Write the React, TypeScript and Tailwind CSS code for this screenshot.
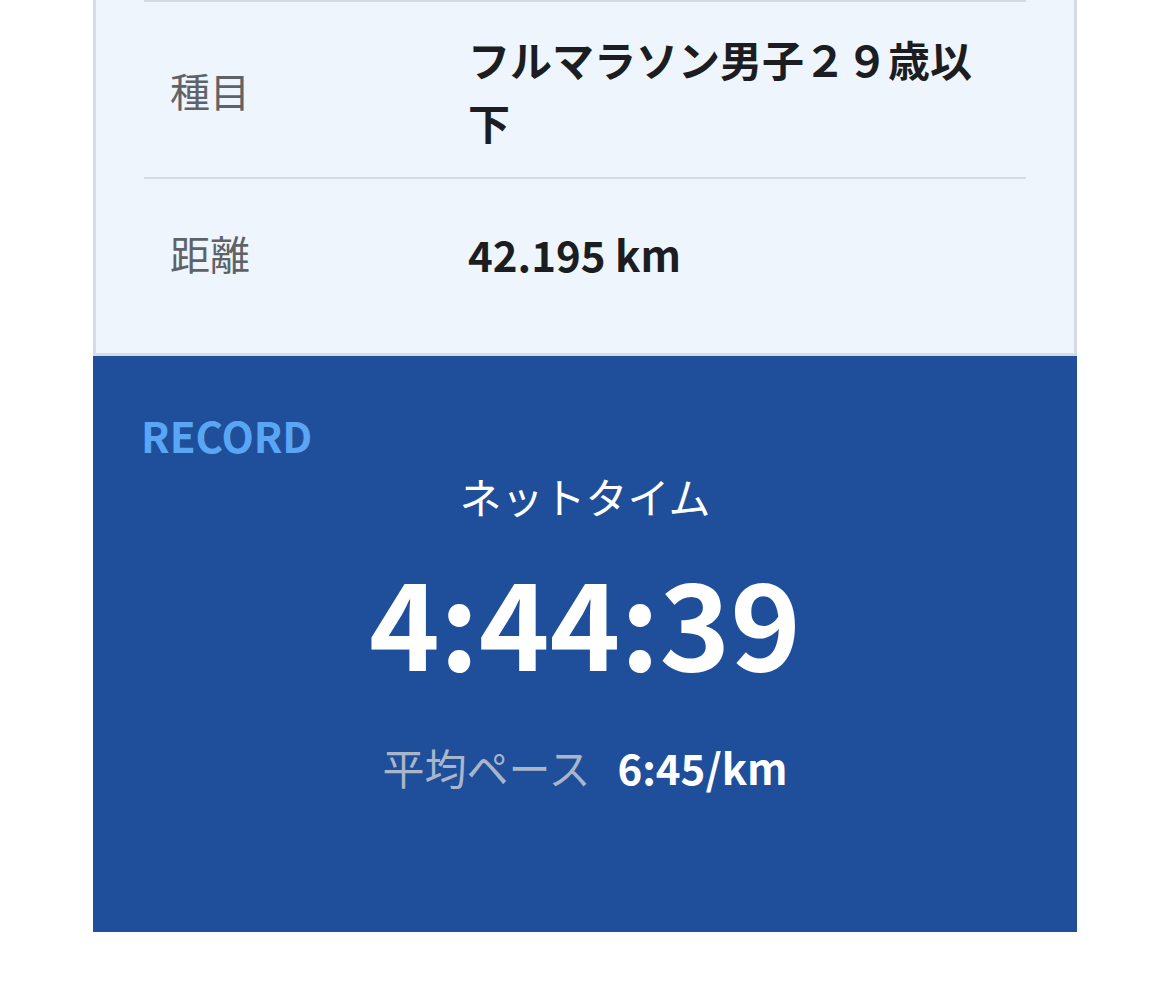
const FONT = "font-['Noto_Sans_CJK_JP','Noto_Sans',sans-serif]";

type Row = { label: string; value: string; className: string };

const ROWS: Row[] = [
  { label: "種目", value: "フルマラソン男子２９歳以下", className: "pt-[25px] pb-[24px]" },
  { label: "距離", value: "42.195 km", className: "pt-[43px] pb-[68px]" },
];

export default function App() {
  return (
    <div className={`min-h-[991px] bg-white ${FONT}`}>
      <div className="ml-[93px] w-[984px]">
        <div className="bg-[#eef5fd] border-x-[3px] border-b-[3px] border-[#d5dce4] px-[48px]">
          {ROWS.map((row) => (
            <div
              key={row.label}
              className={`flex items-center border-t-2 border-[#d3dae2] ${row.className}`}
            >
              <div className="w-[324px] shrink-0 pl-[26px] text-[40px] leading-[63px] text-[#5f6368]">
                {row.label}
              </div>
              <div className="w-[520px] text-[42px] leading-[63px] font-bold text-[#1c1d20]">
                {row.value}
              </div>
            </div>
          ))}
        </div>

        <div className="h-[576px] bg-[#1f4f9b] pt-[49px] pl-[48px] pr-[50px]">
          <div className="text-[42px] leading-[60px] font-bold text-[#5aa6f5]">RECORD</div>
          <div className="text-center text-[42px] leading-[60px] text-white mt-[1px] pl-[2px]">
            ネットタイム
          </div>
          <div className="text-center text-[120px] leading-[150px] font-bold text-white mt-[18px] pl-[2px]">
            4:44:39
          </div>
          <div className="flex items-baseline justify-center gap-[27px] mt-[41px] text-[42px] leading-[63px] pl-[2px]">
            <span className="text-[#a9b6c9]">平均ペース</span>
            <span className="font-bold text-white">6:45/km</span>
          </div>
        </div>
      </div>
    </div>
  );
}
